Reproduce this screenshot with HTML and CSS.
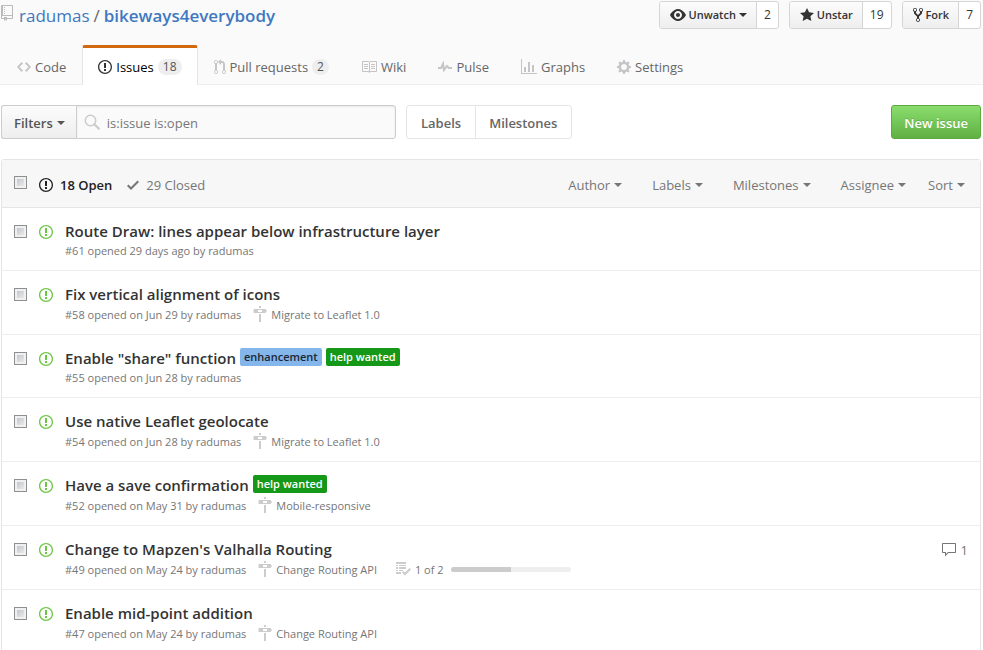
FILE: index.html
```html
<!DOCTYPE html>
<html lang="en">
<head>
<meta charset="utf-8">
<title>Issues · radumas/bikeways4everybody</title>
<link rel="stylesheet" href="styles.css">
</head>
<body>
<svg class="sprite" aria-hidden="true">
  <symbol id="repo" viewBox="0 0 12 16"><path fill-rule="evenodd" d="M4 9H3V8h1v1zm0-3H3v1h1V6zm0-2H3v1h1V4zm0-2H3v1h1V2zm8-1v12c0 .55-.45 1-1 1H6v2l-1.500-1.500L3 16v-2H1c-.55 0-1-.45-1-1V1c0-.55.45-1 1-1h10c.55 0 1 .45 1 1zm-1 10H1v2h2v-1h3v1h5v-2zm0-10H2v9h9V1z"/></symbol>
  <symbol id="eye" viewBox="0 0 16 16"><path fill-rule="evenodd" d="M8.060 2C3 2 0 8 0 8s3 6 8.060 6C13 14 16 8 16 8s-3-6-7.940-6zM8 12c-2.200 0-4-1.780-4-4 0-2.200 1.800-4 4-4 2.220 0 4 1.800 4 4 0 2.220-1.780 4-4 4zm2-4c0 1.110-.89 2-2 2-1.110 0-2-.89-2-2 0-1.110.89-2 2-2 1.110 0 2 .89 2 2z"/></symbol>
  <symbol id="star" viewBox="0 0 14 16"><path d="M14 6l-4.900-.64L7 1 4.900 5.360 0 6l3.600 3.260L2.670 14 7 11.670 11.330 14l-.93-4.740z"/></symbol>
  <symbol id="fork" viewBox="0 0 10 16"><path fill-rule="evenodd" d="M8 1a1.993 1.993 0 0 0-1 3.720V6L5 8 3 6V4.720A1.993 1.993 0 0 0 2 1a1.993 1.993 0 0 0-1 3.720V6.500l3 3v1.780A1.993 1.993 0 0 0 5 15a1.993 1.993 0 0 0 1-3.720V9.500l3-3V4.720A1.993 1.993 0 0 0 8 1zM2 4.200C1.340 4.200.8 3.650.8 3c0-.65.55-1.200 1.200-1.200.65 0 1.200.55 1.200 1.200 0 .65-.55 1.200-1.200 1.200zm3 10c-.66 0-1.200-.55-1.200-1.200 0-.65.55-1.200 1.200-1.200.65 0 1.200.55 1.200 1.200 0 .65-.55 1.200-1.200 1.200zm3-10c-.66 0-1.200-.55-1.200-1.200 0-.65.55-1.200 1.200-1.200.65 0 1.200.55 1.200 1.200 0 .65-.55 1.200-1.200 1.200z"/></symbol>
  <symbol id="code" viewBox="0 0 14 16"><path d="M9.500 3L8 4.500 11.500 8 8 11.500 9.500 13 14 8 9.500 3zm-5 0L0 8l4.500 5L6 11.500 2.500 8 6 4.500 4.500 3z"/></symbol>
  <symbol id="issue" viewBox="0 0 14 16"><path fill-rule="evenodd" d="M7 2.300c3.140 0 5.700 2.560 5.700 5.700s-2.560 5.700-5.700 5.700A5.710 5.710 0 0 1 1.300 8c0-3.140 2.560-5.700 5.700-5.700zM7 1C3.140 1 0 4.140 0 8s3.140 7 7 7 7-3.140 7-7-3.140-7-7-7zm1 3H6v5h2V4zm0 6H6v2h2v-2z"/></symbol>
  <symbol id="pull" viewBox="0 0 12 16"><path fill-rule="evenodd" d="M11 11.280V5c-.03-.78-.34-1.470-.94-2.060C9.460 2.350 8.780 2.030 8 2H7V0L4 3l3 3V4h1c.27.02.48.11.69.31.21.2.3.42.31.69v6.280A1.993 1.993 0 0 0 10 15a1.993 1.993 0 0 0 1-3.720zm-1 2.920c-.66 0-1.200-.55-1.200-1.200 0-.65.55-1.200 1.200-1.200.65 0 1.200.55 1.200 1.200 0 .65-.55 1.200-1.200 1.200zM4 3c0-1.110-.89-2-2-2a1.993 1.993 0 0 0-1 3.720v6.560A1.993 1.993 0 0 0 2 15a1.993 1.993 0 0 0 1-3.720V4.720c.59-.34 1-.98 1-1.720zm-.8 10c0 .66-.55 1.200-1.200 1.200-.65 0-1.200-.55-1.200-1.200 0-.65.55-1.200 1.200-1.200.65 0 1.200.55 1.200 1.200zM2 4.200C1.340 4.200.8 3.650.8 3c0-.65.55-1.200 1.200-1.200.65 0 1.200.55 1.200 1.200 0 .65-.55 1.200-1.200 1.200z"/></symbol>
  <symbol id="book" viewBox="0 0 16 16"><path fill-rule="evenodd" d="M3 5h4v1H3V5zm0 3h4V7H3v1zm0 2h4V9H3v1zm11-5h-4v1h4V5zm0 2h-4v1h4V7zm0 2h-4v1h4V9zm2-6v9c0 .55-.45 1-1 1H9.500l-1 1-1-1H2c-.55 0-1-.45-1-1V3c0-.55.45-1 1-1h5.500l1 1 1-1H15c.55 0 1 .45 1 1zm-8 .5L7.500 3H2v9h6V3.500zm7-.5H9.500l-.5.5V12h6V3z"/></symbol>
  <symbol id="pulse" viewBox="0 0 14 16"><path d="M11.500 8L8.800 5.400 6.600 8.500 5.500 1.600 2.380 8H0v2h3.600l.9-1.800.9 5.400L9 8.500l1.600 1.500H14V8h-2.500z"/></symbol>
  <symbol id="graph" viewBox="0 0 16 16"><path d="M16 14v1H0V0h1v14h15zM5 13H3V8h2v5zm4 0H7V3h2v10zm4 0h-2V6h2v7z"/></symbol>
  <symbol id="gear" viewBox="0 0 14 16"><path fill-rule="evenodd" d="M14 8.770v-1.600l-1.940-.64-.45-1.090.88-1.840-1.130-1.130-1.810.91-1.090-.45-.69-1.920h-1.600l-.63 1.940-1.110.45-1.840-.88-1.130 1.130.91 1.810-.45 1.090L0 7.230v1.590l1.940.64.45 1.090-.88 1.840 1.130 1.130 1.810-.91 1.090.45.69 1.920h1.590l.63-1.940 1.110-.45 1.840.88 1.130-1.130-.92-1.810.47-1.090L14 8.750v.02zM7 11c-1.660 0-3-1.340-3-3s1.340-3 3-3 3 1.340 3 3-1.340 3-3 3z"/></symbol>
  <symbol id="search" viewBox="0 0 16 16"><circle cx="6.500" cy="6.500" r="5.200" fill="none" stroke="currentColor" stroke-width="1.500"/><path d="M10.300 10.300l4.500 4.300" stroke="currentColor" stroke-width="2.200" stroke-linecap="round"/></symbol>
  <symbol id="check" viewBox="0 0 12 16"><path d="M12 5l-8 8-4-4 1.500-1.500L4 10l6.500-6.500z"/></symbol>
  <symbol id="milestone" viewBox="0 0 14 16"><path fill-rule="evenodd" d="M8 2H6V0h2v2zm4.500 5h-11C.9 7 .5 6.600.5 6V4c0-.6.400-1 1-1h11l1.500 2-1.500 2zM9 4H5v2h4V4zM6 16h2V8H6v8z"/></symbol>
  <symbol id="tasks" viewBox="0 0 16 16"><path fill-rule="evenodd" d="M1 1h10v2H1zM1 4h2v1H1zM4 4h7v1H4zM1 6h2v2H1zM4 6h7v2H4zM1 9h2v1H1zM4 9h4v1H4zM1 11h5v2H1zM16 8.500l-6 6-3-3L8.500 10l1.500 1.500L14.500 7z"/></symbol>
  <symbol id="comment" viewBox="0 0 16 16"><path fill-rule="evenodd" d="M14 1H2c-.55 0-1 .45-1 1v8c0 .55.45 1 1 1h2v3.500L7.500 11H14c.55 0 1-.45 1-1V2c0-.55-.45-1-1-1zm0 9H7l-2 2v-2H2V2h12v8z"/></symbol>
</svg>

<header class="repo-head">
  <div class="repo-bar">
    <h1 class="repo-title">
      <svg class="icon repo-icon"><use href="#repo"/></svg>
      <a href="#">radumas</a><span class="slash">/</span><a href="#"><strong>bikeways4everybody</strong></a>
    </h1>
    <div class="repo-actions">
      <div class="social"><button type="button"><svg class="icon"><use href="#eye"/></svg>Unwatch<span class="caret"></span></button><a href="#">2</a></div>
      <div class="social"><button type="button"><svg class="icon w14"><use href="#star"/></svg>Unstar</button><a href="#">19</a></div>
      <div class="social"><button type="button"><svg class="icon w10"><use href="#fork"/></svg>Fork</button><a href="#">7</a></div>
    </div>
  </div>
  <nav class="tabs">
    <a href="#"><svg class="icon w14"><use href="#code"/></svg>Code</a>
    <a href="#" class="selected" aria-current="page"><svg class="icon w14"><use href="#issue"/></svg>Issues<span class="counter">18</span></a>
    <a href="#"><svg class="icon w12"><use href="#pull"/></svg>Pull requests<span class="counter">2</span></a>
    <a href="#"><svg class="icon"><use href="#book"/></svg>Wiki</a>
    <a href="#"><svg class="icon w14"><use href="#pulse"/></svg>Pulse</a>
    <a href="#"><svg class="icon"><use href="#graph"/></svg>Graphs</a>
    <a href="#"><svg class="icon w14"><use href="#gear"/></svg>Settings</a>
  </nav>
</header>

<main>
  <div class="toolbar">
    <form class="search">
      <button type="button" class="filters">Filters<span class="caret"></span></button>
      <div class="search-box">
        <svg class="icon"><use href="#search"/></svg>
        <input type="text" aria-label="Search all issues" value="is:issue is:open">
      </div>
    </form>
    <nav class="subnav"><a href="#">Labels</a><a href="#">Milestones</a></nav>
    <button type="button" class="new-issue">New issue</button>
  </div>

  <section class="listing">
    <div class="listing-head">
      <input type="checkbox" aria-label="Select all issues">
      <div class="states">
        <a href="#" class="open"><svg class="icon w14"><use href="#issue"/></svg>18 Open</a>
        <a href="#"><svg class="icon w12"><use href="#check"/></svg>29 Closed</a>
      </div>
      <div class="menus">
        <button type="button">Author<span class="caret"></span></button>
        <button type="button">Labels<span class="caret"></span></button>
        <button type="button">Milestones<span class="caret"></span></button>
        <button type="button">Assignee<span class="caret"></span></button>
        <button type="button" class="sort">Sort<span class="caret"></span></button>
      </div>
    </div>
    <ul class="issues">
      <li>
        <input type="checkbox" aria-label="Select issue 61"><svg class="icon w14 state"><use href="#issue"/></svg>
        <div class="issue">
          <div class="title"><a href="#">Route Draw: lines appear below infrastructure layer</a></div>
          <div class="meta"><span>#61 opened 29 days ago by <a href="#">radumas</a></span></div>
        </div>
      </li>
      <li>
        <input type="checkbox" aria-label="Select issue 58"><svg class="icon w14 state"><use href="#issue"/></svg>
        <div class="issue">
          <div class="title"><a href="#">Fix vertical alignment of icons</a></div>
          <div class="meta"><span>#58 opened on Jun 29 by <a href="#">radumas</a></span><a href="#" class="milestone"><svg class="icon w14"><use href="#milestone"/></svg>Migrate to Leaflet 1.0</a></div>
        </div>
      </li>
      <li>
        <input type="checkbox" aria-label="Select issue 55"><svg class="icon w14 state"><use href="#issue"/></svg>
        <div class="issue">
          <div class="title"><a href="#">Enable "share" function</a><a href="#" class="label blue">enhancement</a><a href="#" class="label green">help wanted</a></div>
          <div class="meta"><span>#55 opened on Jun 28 by <a href="#">radumas</a></span></div>
        </div>
      </li>
      <li>
        <input type="checkbox" aria-label="Select issue 54"><svg class="icon w14 state"><use href="#issue"/></svg>
        <div class="issue">
          <div class="title"><a href="#">Use native Leaflet geolocate</a></div>
          <div class="meta"><span>#54 opened on Jun 28 by <a href="#">radumas</a></span><a href="#" class="milestone"><svg class="icon w14"><use href="#milestone"/></svg>Migrate to Leaflet 1.0</a></div>
        </div>
      </li>
      <li>
        <input type="checkbox" aria-label="Select issue 52"><svg class="icon w14 state"><use href="#issue"/></svg>
        <div class="issue">
          <div class="title"><a href="#">Have a save confirmation</a><a href="#" class="label green">help wanted</a></div>
          <div class="meta"><span>#52 opened on May 31 by <a href="#">radumas</a></span><a href="#" class="milestone"><svg class="icon w14"><use href="#milestone"/></svg>Mobile-responsive</a></div>
        </div>
      </li>
      <li>
        <input type="checkbox" aria-label="Select issue 49"><svg class="icon w14 state"><use href="#issue"/></svg>
        <div class="issue">
          <div class="title"><a href="#">Change to Mapzen's Valhalla Routing</a></div>
          <div class="meta"><span>#49 opened on May 24 by <a href="#">radumas</a></span><a href="#" class="milestone"><svg class="icon w14"><use href="#milestone"/></svg>Change Routing API</a><span class="tasks"><svg class="icon"><use href="#tasks"/></svg>1 of 2<span class="progress"><span class="bar" style="width: 50%"></span></span></span></div>
        </div>
        <a href="#" class="comments"><svg class="icon"><use href="#comment"/></svg>1</a>
      </li>
      <li>
        <input type="checkbox" aria-label="Select issue 47"><svg class="icon w14 state"><use href="#issue"/></svg>
        <div class="issue">
          <div class="title"><a href="#">Enable mid-point addition</a></div>
          <div class="meta"><span>#47 opened on May 24 by <a href="#">radumas</a></span><a href="#" class="milestone"><svg class="icon w14"><use href="#milestone"/></svg>Change Routing API</a></div>
        </div>
      </li>
    </ul>
  </section>
</main>
</body>
</html>
```
FILE: styles.css
```css
* { box-sizing: border-box; }

body {
  margin: 0;
  background: #fff;
  color: #333;
  font: 13px/20px "Open Sans", "Noto Sans", sans-serif;
}

a { color: inherit; text-decoration: none; }
button, input { font: inherit; color: inherit; margin: 0; }
button { cursor: pointer; }

.sprite { display: none; }
.icon { flex: none; width: 16px; height: 16px; fill: currentColor; }
.w14 { width: 14px; }
.w12 { width: 12px; }
.w10 { width: 10px; }

.caret {
  flex: none;
  border: 4px solid transparent;
  border-top-color: currentColor;
  border-bottom: 0;
}

/* Repository header */
.repo-head { background: #fafafa; border-bottom: 1px solid #eee; }
.repo-bar {
  display: flex;
  justify-content: space-between;
  align-items: flex-start;
  height: 45px;
  padding: 1px 2px 0 1px;
}
.repo-title {
  display: flex;
  align-items: center;
  margin: 0;
  padding-top: 2px;
  font-size: 17px;
  font-weight: 400;
  line-height: 26px;
  color: #4078c0;
}
.repo-icon { width: 12px; margin-right: 6px; color: #bbb; align-self: flex-start; margin-top: 2px; }
.slash { margin: 0 4px; color: #666; }
.repo-title strong { font-weight: 600; }

.repo-actions { display: flex; gap: 10px; }
.social {
  display: flex;
  font-size: 12px;
  line-height: 26px;
  border: 1px solid #d5d5d5;
  border-radius: 3px;
  background: #fff;
  overflow: hidden;
}
.social button {
  display: flex;
  align-items: center;
  gap: 3px;
  padding: 0 9px 0 10px;
  border: 0;
  border-right: 1px solid #d5d5d5;
  background: linear-gradient(#fcfcfc, #eee);
  font-size: 11px;
  font-weight: 600;
}
.social a { padding: 0 7px; }

.tabs { display: flex; padding-left: 1px; margin-bottom: -1px; }
.tabs a {
  display: flex;
  align-items: center;
  gap: 4px;
  height: 40px;
  padding: 1px 15px 0;
  border: 1px solid transparent;
  border-top: 3px solid transparent;
  border-bottom: 0;
  border-radius: 3px 3px 0 0;
  color: #666;
}
.tabs .icon { color: #c5c5c5; }
.tabs .selected {
  background: #fff;
  border-color: #d26911 #e5e5e5 transparent;
  color: #000;
}
.tabs .selected .icon { color: #333; }
.counter {
  padding: 0 5px;
  border-radius: 10px;
  background: #eee;
  color: #555;
  font-size: 12px;
  line-height: 16px;
}

/* Toolbar */
main { padding: 20px 2px 0 1px; }
.toolbar { display: flex; height: 34px; margin-bottom: 20px; font-weight: 600; color: #555; }
.search { display: flex; flex: 0 1 395px; }
.filters {
  display: flex;
  align-items: center;
  gap: 4px;
  padding: 1px 11px 0 12px;
  border: 1px solid #ccc;
  border-right: 0;
  border-radius: 3px 0 0 3px;
  background: linear-gradient(#fcfcfc, #eee);
  font-weight: 600;
}
.search-box {
  display: flex;
  flex: 1;
  align-items: center;
  gap: 7px;
  min-width: 0;
  padding-left: 7px;
  border: 1px solid #ccc;
  border-radius: 0 3px 3px 0;
  background: #fafafa;
  box-shadow: inset 0 1px 2px rgba(0, 0, 0, .08);
}
.search-box .icon { color: #ccc; }
.search-box input {
  flex: 1;
  min-width: 0;
  padding: 2px 0 0;
  border: 0;
  outline: 0;
  background: none;
  color: #777;
  font-weight: 400;
}
.subnav {
  display: flex;
  margin-left: 10px;
  border: 1px solid #e5e5e5;
  border-radius: 3px;
  line-height: 34px;
  color: #666;
}
.subnav a { padding: 0 14px; }
.subnav a + a { padding-left: 13px; border-left: 1px solid #e5e5e5; }
.new-issue {
  margin-left: auto;
  padding: 2px 12px 0;
  border: 1px solid #5ca941;
  border-radius: 3px;
  background: linear-gradient(#8add6d, #60b044);
  color: #fff;
  font-weight: 600;
  text-shadow: 0 -1px 0 rgba(0, 0, 0, .15);
}

/* Issue list */
.listing { border: 1px solid #e5e5e5; border-radius: 3px 3px 0 0; }
.listing-head {
  display: flex;
  align-items: center;
  height: 48px;
  padding: 3px 15px 0 12px;
  border-bottom: 1px solid #e5e5e5;
  background: #f7f7f7;
  color: #767676;
}
input[type="checkbox"] {
  flex: none;
  appearance: none;
  width: 13px;
  height: 13px;
  border: 1px solid #8e8f8f;
  background: linear-gradient(135deg, #b9bdc5, #f3f3f3);
  box-shadow: inset 0 0 0 2px #f0f0f0;
}
.listing-head input { margin-bottom: 6px; }
.states { display: flex; gap: 15px; margin-left: 12px; }
.states a { display: flex; align-items: center; gap: 7px; }
.states .open { color: #222; font-weight: 600; }
.menus { display: flex; gap: 30px; margin-left: auto; }
.menus button {
  display: flex;
  align-items: center;
  gap: 4px;
  padding: 0;
  border: 0;
  background: none;
}
.menus .sort { margin-left: -8px; }

.issues { margin: 0; padding: 0; list-style: none; }
.issues li {
  display: flex;
  align-items: flex-start;
  padding: 12px 12px 11px;
}
.issues li + li { border-top: 1px solid #eee; }
.issues input { margin-top: 5px; }
.state { margin: 4px 12px 0; color: #6cc644; }
.issue { flex: 1; min-width: 0; }
.title { display: flex; align-items: center; gap: 4px; height: 22px; font-size: 15px; font-weight: 600; }
.label {
  margin-bottom: 2px;
  padding: 0 4px;
  border-radius: 2px;
  font-size: 11px;
  line-height: 18px;
}
.blue { background: #84b6eb; color: #1c2733; }
.green { background: #159818; color: #fff; }
.meta {
  display: flex;
  align-items: center;
  height: 17px;
  font-size: 11px;
  line-height: 17px;
  color: #767676;
}
.meta:has(.milestone) { height: 18px; }
.milestone, .tasks { display: flex; align-items: center; gap: 4px; margin-left: 12px; }
.tasks { margin-left: 18px; }
.meta .icon { color: #ccc; }
.progress { width: 120px; height: 5px; margin-left: 3px; border-radius: 3px; background: #eee; overflow: hidden; }
.bar { display: block; height: 5px; background: #ccc; }
.comments { display: flex; align-items: center; gap: 4px; margin-top: 2px; color: #767676; }
```
